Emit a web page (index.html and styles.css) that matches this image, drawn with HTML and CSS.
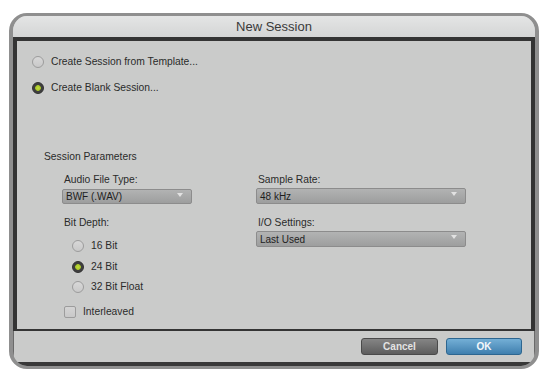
FILE: index.html
```html
<!DOCTYPE html>
<html lang="en">
<head>
    <meta charset="UTF-8" />
    <title>New Session</title>
    <link rel="stylesheet" href="styles.css">
</head>
<body>
    <div class="window">
        <div class="titlebar">New Session</div>

        <div class="panel">
            <div class="choices">
                <label class="option"><span class="radio"></span>Create Session from Template...</label>
                <label class="option"><span class="radio checked"></span>Create Blank Session...</label>
            </div>

            <div class="section-title">Session Parameters</div>

            <div class="params">
                <div class="col col-left">
                    <div class="field-label">Audio File Type:</div>
                    <div class="select select-short"><span>BWF (.WAV)</span><span class="arrow"></span></div>

                    <div class="field-label gap">Bit Depth:</div>
                    <div class="bit-list">
                        <label class="option"><span class="radio"></span>16 Bit</label>
                        <label class="option"><span class="radio checked"></span>24 Bit</label>
                        <label class="option"><span class="radio"></span>32 Bit Float</label>
                    </div>

                    <label class="option check-row"><span class="checkbox"></span>Interleaved</label>
                </div>

                <div class="col col-right">
                    <div class="field-label">Sample Rate:</div>
                    <div class="select"><span>48 kHz</span><span class="arrow"></span></div>

                    <div class="field-label gap">I/O Settings:</div>
                    <div class="select"><span>Last Used</span><span class="arrow"></span></div>
                </div>
            </div>
        </div>

        <!-- dialog buttons -->
        <div class="footer">
            <button class="btn btn-cancel">Cancel</button>
            <button class="btn btn-ok">OK</button>
        </div>
    </div>
</body>
</html>
```

FILE: styles.css
```css
body { margin: 0; padding: 13px 0 0 9px; background: #fff; font-family: "Liberation Sans", Arial, sans-serif; color: #2b2b2b; }

.window {
    box-sizing: border-box;
    width: 530px;
    height: 356px;
    border-style: solid;
    border-color: #8f8f8f;
    border-width: 3px 4px 3px 4px;
    border-radius: 18px;
    background: #cacbca;
    overflow: hidden;
    display: flex;
    flex-direction: column;
}

.titlebar {
    height: 21px;
    line-height: 21px;
    text-align: center;
    font-size: 13px;
    color: #3a3a3a;
    background: linear-gradient(#e4e5e5, #d4d5d5);
}

.panel {
    box-sizing: border-box;
    height: 294px;
    border-style: solid;
    border-color: #343434;
    border-width: 4px 4px 2px 4px;
    padding: 15px 0 0 15px;
    font-size: 10.3px;
}

.choices { display: flex; flex-direction: column; gap: 14px; }

.option { display: flex; align-items: center; gap: 7px; height: 12px; line-height: 12px; }

.radio {
    box-sizing: border-box;
    flex: none;
    width: 12px;
    height: 12px;
    border-radius: 50%;
    border: 1px solid #9c9c9c;
    background: linear-gradient(#d8d8d8, #c9c9c9);
}
.radio.checked {
    border-color: #2e2e2e;
    background: radial-gradient(circle, #c4df3c 0, #a8c62a 2.5px, #3c3c3c 3.2px, #484848 100%);
}

.checkbox {
    box-sizing: border-box;
    flex: none;
    width: 12px;
    height: 12px;
    border-radius: 2px;
    border: 1px solid #9c9c9c;
    background: linear-gradient(#d4d4d4, #c8c8c8);
}

.section-title { margin: 57px 0 0 12px; height: 12px; line-height: 12px; }

.params { display: flex; gap: 64px; margin: 11px 0 0 30px; }
.col { display: flex; flex-direction: column; }
.col-left { width: 130px; }
.col-right { width: 210px; }

.field-label { height: 12px; line-height: 12px; padding-left: 2px; margin-bottom: 3px; }
.field-label.gap { margin-top: 13px; }
.col-right .field-label { margin-bottom: 2px; }

.select {
    box-sizing: border-box;
    height: 16px;
    display: flex;
    align-items: center;
    justify-content: space-between;
    padding: 0 8px 0 3px;
    border: 1px solid #8c8c8c;
    border-radius: 2px;
    background: linear-gradient(#b2b3b3, #9d9e9e);
    color: #1e1e1e;
    font-size: 10px;
}
.select-short { height: 15px; }
.arrow {
    width: 0;
    height: 0;
    border-left: 3px solid transparent;
    border-right: 3px solid transparent;
    border-top: 4px solid #e2e2e2;
    margin-bottom: 4px;
}

.bit-list { display: flex; flex-direction: column; gap: 8.5px; margin: 8px 0 0 10px; }
.bit-list .option { flex: none; }

.check-row { margin: 13px 0 0 2px; }

.footer {
    flex: 1;
    display: flex;
    justify-content: flex-end;
    align-items: center;
    gap: 8px;
    padding-right: 12px;
    border-bottom: 4px solid #383838;
    border-left: 1px solid #6a6a6a;
    border-right: 1px solid #6a6a6a;
}

.btn {
    box-sizing: border-box;
    height: 17px;
    border-radius: 3px;
    font-family: "Liberation Sans", Arial, sans-serif;
    font-size: 10px;
    font-weight: bold;
    padding: 0;
    cursor: pointer;
}
.btn-cancel {
    width: 77px;
    color: #e3e3e3;
    border: 1px solid #4a4a4a;
    background: linear-gradient(#858585, #5d5d5d);
}
.btn-ok {
    width: 76px;
    color: #f4f8fb;
    border: 1px solid #2d6690;
    background: linear-gradient(#74afd6, #3f7fae);
}
```
